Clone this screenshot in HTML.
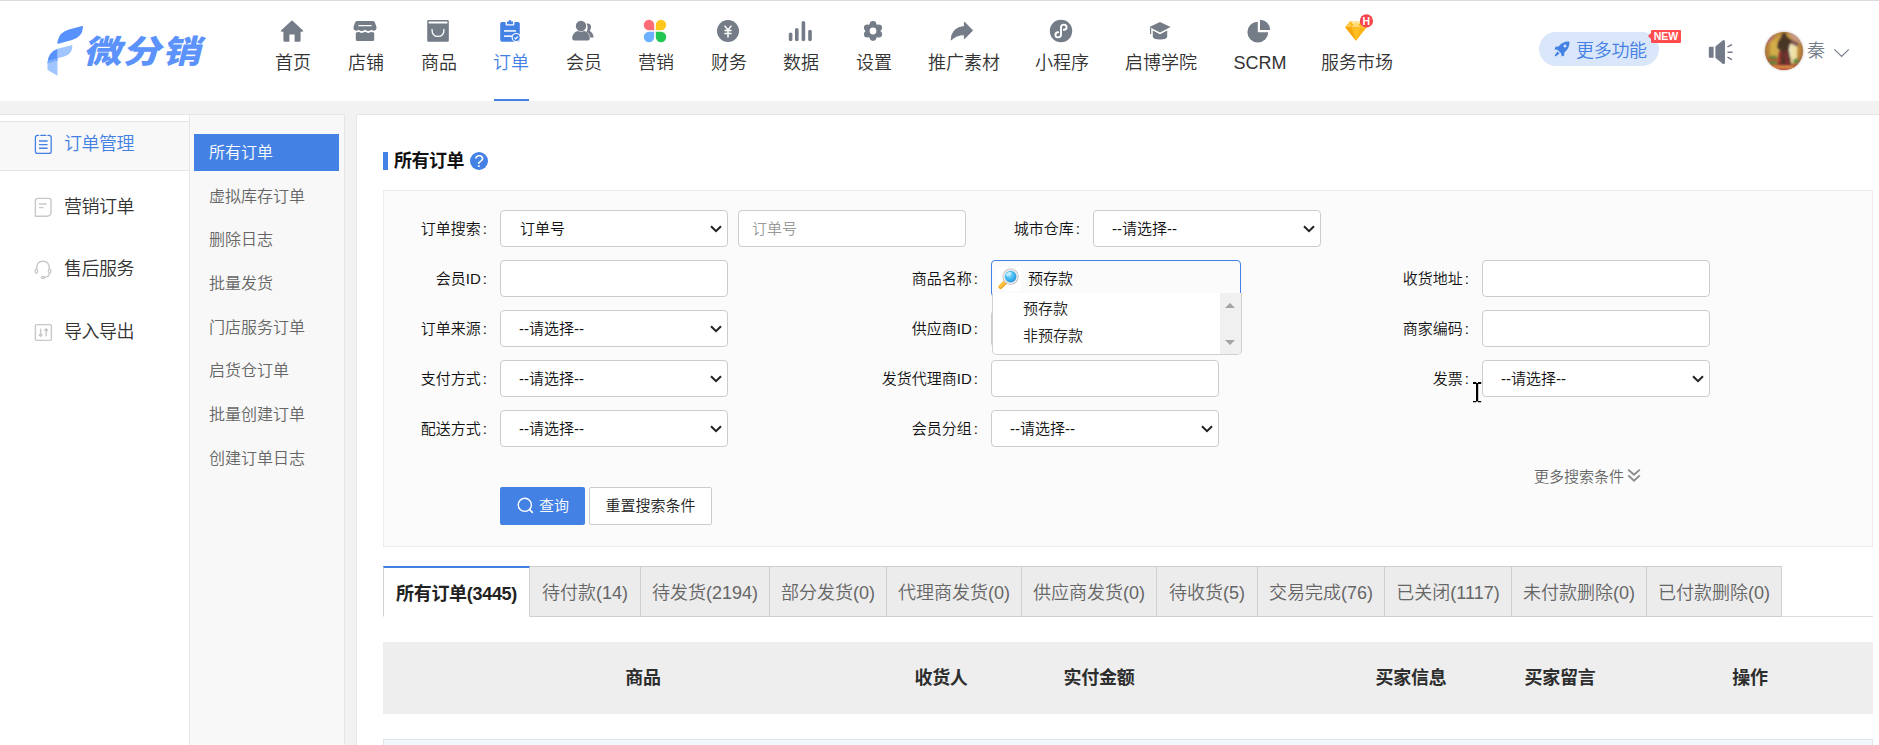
<!DOCTYPE html>
<html lang="zh-CN">
<head>
<meta charset="utf-8">
<title>所有订单</title>
<style>
*{box-sizing:border-box;margin:0;padding:0}
html,body{width:1879px;height:745px;overflow:hidden}
body{background:#f2f2f2;font-family:"Liberation Sans","Noto Sans CJK SC",sans-serif;color:#333;position:relative;font-size:15px}
.abs{position:absolute}
/* header */
#topline{position:absolute;left:0;top:0;width:1879px;height:2px;background:#d9dadb}
#header{position:absolute;left:0;top:1px;width:1879px;height:100px;background:#fff}
.nav{position:absolute;top:0;height:100px;text-align:center;white-space:nowrap;color:#333;font-size:18px}
.nav .ic{position:absolute;left:50%;top:16px;width:28px;height:28px;margin-left:-15px}
.nav .tx{position:absolute;left:50%;top:49px;transform:translateX(-50%);line-height:26px;height:26px;font-weight:350}
.nav.on{color:#4481e4}
.nav.on:after{content:"";position:absolute;left:50%;margin-left:-17px;bottom:0;width:35px;height:2px;background:#4481e4}

#logotx{left:80px;top:22px;font-family:"Noto Sans CJK SC","Liberation Sans",sans-serif;font-weight:900;font-size:32px;line-height:52px;color:#5b92fb;transform:skewX(-14deg) scaleX(1.2);transform-origin:0 100%;letter-spacing:1px;white-space:nowrap}
#more{left:1539px;top:31px;width:120px;height:34px;border-radius:17px;background:#dae6fa;color:#4481e4;font-size:18px;line-height:34px;font-weight:350}
#more span{position:absolute;left:37px;top:2px;white-space:nowrap;letter-spacing:-0.3px}
#new{left:1651px;top:29px;width:30px;height:13px;background:#ff4d4f;color:#fff;font-size:10.5px;font-weight:bold;line-height:13px;text-align:center;border-radius:1px;letter-spacing:0}
#new i{position:absolute;left:-3px;top:3px;border:3.5px solid transparent;border-left:none;border-right:3px solid #ff4d4f;width:0;height:0}
#avatar{left:1762px;top:28px}
#uname{left:1807px;top:37px;font-size:18px;line-height:26px;color:#737b87;font-weight:350}
/* sidebars */
#side1{position:absolute;left:0;top:114px;width:190px;height:631px;background:#fff;border-right:1px solid #e6e6e6;border-top:1px solid #e6e6e6}
.s1{position:absolute;left:0;width:189px;height:50px;font-size:18px;line-height:26px;color:#333;font-weight:350}
.s1 .t{position:absolute;left:64px;top:11px;white-space:nowrap;letter-spacing:-0.5px}
.s1 svg{position:absolute;left:33px;top:13px}
#side2{position:absolute;left:190px;top:114px;width:155px;height:631px;background:#f8f8f8;border-right:1px solid #e6e6e6;border-top:1px solid #e6e6e6}
.s2{position:absolute;left:19px;font-size:16px;line-height:22px;color:#666;white-space:nowrap;font-weight:350}
#main{position:absolute;left:356px;top:114px;width:1523px;height:631px;background:#fff;border-top:1px solid #e6e6e6;border-left:1px solid #e6e6e6}
/* form */
#panel{position:absolute;left:383px;top:190px;width:1490px;height:357px;background:#fbfbfb;border:1px solid #ececec}
.lb{position:absolute;font-size:15px;line-height:22px;color:#111;white-space:nowrap;text-align:right;font-weight:350}
.lb i{font-style:normal;margin-left:2px}
.inp{position:absolute;height:37px;background:#fff;border:1px solid #ccc;border-radius:4px;font-size:15px;line-height:35px;color:#111;white-space:nowrap;font-weight:350}
.sel .v{position:absolute;left:19px;top:0}
.sel svg{position:absolute;right:4px;top:12.500px}
.tab{position:absolute;top:566px;height:51px;background:#ececec;border:1px solid #cfcfcf;border-left:none;font-size:18px;line-height:52px;color:#666;text-align:center;white-space:nowrap;font-weight:350}
.th{position:absolute;top:665px;font-size:18px;line-height:26px;font-weight:bold;color:#2d2d2d;transform:translateX(-50%);white-space:nowrap;letter-spacing:-0.3px}

#ttl{left:394px;top:148px;font-size:18px;line-height:26px;font-weight:bold;color:#111;white-space:nowrap;letter-spacing:-0.5px}
#help{left:470px;top:152px;width:18px;height:18px;border-radius:50%;background:#4481e4;color:#fff;font-size:17px;font-weight:normal;line-height:19px;text-align:center;font-family:"Liberation Sans",sans-serif}
#gname{border-color:#4481e4;background:transparent}
#dd{left:992px;top:293px;width:250px;height:62px;background:#fff;border:1px solid #cfcfcf;border-top:none;border-radius:0 0 5px 5px;font-size:15px;line-height:26px;color:#222;font-weight:350;white-space:nowrap;overflow:hidden}
#sb{right:0;top:0;width:21px;height:62px;background:#f0f0f0}
#sb i{position:absolute;left:5px;width:0;height:0;border-left:5.5px solid transparent;border-right:5.5px solid transparent}
#morec{left:1534px;top:466px;font-size:15px;line-height:22px;color:#666;font-weight:350;white-space:nowrap}
#btnq{left:500px;top:487px;width:85px;height:38px;background:#4481e4;border-radius:2px;color:#fff;font-size:15px;line-height:38px;font-weight:350}
#btnq span{position:absolute;left:39px;top:0;white-space:nowrap}
#btnr{left:589px;top:487px;width:123px;height:38px;background:#fff;border:1px solid #ccc;border-radius:2px;color:#222;font-size:15px;line-height:36px;text-align:center;font-weight:350;white-space:nowrap}
.tab.on{background:#fff;border-left:1px solid #cfcfcf;border-top:2px solid #4481e4;border-bottom:1px solid #fff;color:#222;font-weight:bold;line-height:52px;letter-spacing:-0.3px}
</style>
</head>
<body>
<div id="topline"></div>
<div id="header">
<svg class="abs" style="left:44px;top:20px" width="44" height="55.300" viewBox="0 0 44 58" preserveAspectRatio="none">
<path d="M13.500 21.500 Q15.500 11.500 25 9 L38 5.200 Q39.200 5 39 6.400 Q38.600 17 28 20 L13.500 24 Z" fill="#5791fb"/>
<path d="M13.500 29 L27.500 25.500 Q28.500 25.300 28.400 26.400 Q28 35.500 19.500 37.500 L13.500 39 Z" fill="#a1c6ff"/>
<path d="M13.500 29 L13.500 41.500 L3.500 44.500 Q3.200 33 13.500 29 Z" fill="#5791fb"/>
<path d="M3.500 44.500 L13.500 41.500 L13.500 57.500 L3.500 51.500 Z" fill="#a1c6ff"/>
<path d="M13.500 39 L13.500 41.500 L3.500 44.500 Q3.600 42.500 4 41.500 Z" fill="#7aabfd"/>
</svg>
<div class="abs" id="logotx">微分销</div>
<div class="nav" style="left:253px;width:80px"><svg class="ic" viewBox="0 0 28 28"><path d="M14 3.2 L25 13.6 Q25.6 14.6 24.4 14.8 L22.6 14.8 L22.6 23.4 Q22.6 24.8 21.2 24.8 L16.6 24.8 L16.6 17.6 L11.4 17.6 L11.4 24.8 L6.8 24.8 Q5.4 24.8 5.4 23.4 L5.4 14.8 L3.6 14.8 Q2.4 14.6 3 13.6 Z" fill="#747c87"/></svg><span class="tx">首页</span></div>
<div class="nav" style="left:326px;width:80px"><svg class="ic" viewBox="0 0 28 28"><path d="M6.2 4 L21.8 4 Q23.2 4 23.8 5.2 L25.4 9.4 Q25.8 11.6 24.6 13 Q22.6 14.6 20.4 12.8 Q17.6 15.4 14 12.8 Q10.4 15.4 7.6 12.8 Q5.4 14.6 3.4 13 Q2.2 11.6 2.6 9.4 L4.2 5.2 Q4.8 4 6.2 4 Z M7.4 8 L20.6 8 L20.6 9.2 L7.4 9.2 Z" fill="#747c87" fill-rule="evenodd"/><path d="M4.8 15.4 Q6.4 15.6 7.6 14.8 Q10.6 17 14 14.8 Q17.400 17 20.4 14.8 Q21.6 15.6 23.2 15.4 L23.2 22.4 Q23.2 24 21.6 24 L6.4 24 Q4.800 24 4.800 22.4 Z" fill="#747c87"/></svg><span class="tx">店铺</span></div>
<div class="nav" style="left:399px;width:80px"><svg class="ic" viewBox="0 0 28 28"><path d="M4.4 3 L23.600 3 Q24.8 3 24.8 4.2 L24.8 23.600 Q24.8 24.8 23.600 24.8 L4.4 24.8 Q3.2 24.8 3.2 23.600 L3.2 4.2 Q3.2 3 4.4 3 Z M4.6 4.4 L4.6 6.4 L23.400 6.4 L23.400 4.4 Z" fill="#747c87" fill-rule="evenodd"/><path d="M8 12.400 Q8 19.400 14 19.400 Q20 19.400 20 12.400" fill="none" stroke="#fff" stroke-width="1.3" stroke-linecap="round"/></svg><span class="tx">商品</span></div>
<div class="nav on" style="left:471px;width:80px"><svg class="ic" viewBox="0 0 28 28"><path d="M6 5 L9.600 5 L9.600 7.2 Q9.600 8.6 11 8.6 L17 8.6 Q18.400 8.6 18.400 7.2 L18.400 5 L22 5 Q23.800 5 23.800 6.800 L23.800 23 Q23.800 24.8 22 24.8 L6 24.8 Q4.200 24.8 4.200 23 L4.200 6.800 Q4.200 5 6 5 Z" fill="#4481e4"/><path d="M11 4.400 L12.600 4.400 Q13 3 14 3 Q15 3 15.400 4.400 L17 4.400 L17 7.2 L11 7.2 Z" fill="#4481e4"/><rect x="8" y="13.2" width="12" height="1.5" fill="#fff"/><rect x="8" y="18.400" width="8" height="1.5" fill="#fff"/><circle cx="20.200" cy="20.600" r="4.600" fill="#fff"/><circle cx="20.200" cy="20.600" r="3.500" fill="#4481e4"/><path d="M18.400 20.600 L19.700 21.900 L22 19.500" fill="none" stroke="#fff" stroke-width="1.200"/></svg><span class="tx">订单</span></div>
<div class="nav" style="left:544px;width:80px"><svg class="ic" viewBox="0 0 28 28"><path d="M17.600 6.600 Q21.400 5.800 22 9.800 Q22.200 12.200 20.600 13.800 Q24.200 16.200 24.600 20.400 L21.400 20.400 Q20.600 16.400 17.600 14.800 Q19.600 10.800 17.600 6.600 Z" fill="#747c87"/><circle cx="12" cy="9" r="5.200" fill="#747c87"/><path d="M3.200 21.400 Q3.400 15.600 8.600 14 Q12 15.600 15.400 14 Q20.600 15.600 20.800 21.400 Q20.800 23.400 18.800 23.400 L5.200 23.400 Q3.200 23.400 3.200 21.400 Z" fill="#747c87"/></svg><span class="tx">会员</span></div>
<div class="nav" style="left:616px;width:80px"><svg class="ic" viewBox="0 0 28 28"><path d="M13.200 13.200 L8 13.200 A5.200 5.200 0 1 1 13.200 8 Z" fill="#ff6b76"/><path d="M14.800 13.200 L14.800 8 A5.200 5.200 0 1 1 20 13.200 Z" fill="#ffc71c"/><path d="M13.200 14.800 L13.200 20 A5.200 5.200 0 1 1 8 14.800 Z" fill="#6cb0ff"/><path d="M14.800 14.800 L20 14.800 A5.200 5.200 0 1 1 14.800 20 Z" fill="#21c653"/></svg><span class="tx">营销</span></div>
<div class="nav" style="left:689px;width:80px"><svg class="ic" viewBox="0 0 28 28"><circle cx="14" cy="14" r="11" fill="#747c87"/><path d="M10.600 8.600 L14 13 L17.400 8.600 M10.400 13.400 L17.600 13.400 M10.400 16.400 L17.600 16.400 M14 13 L14 20.400" fill="none" stroke="#fff" stroke-width="1.500"/></svg><span class="tx">财务</span></div>
<div class="nav" style="left:761px;width:80px"><svg class="ic" viewBox="0 0 28 28"><g stroke="#747c87" stroke-width="3.600" stroke-linecap="round"><path d="M4.600 17.200 L4.600 22.400"/><path d="M10.800 12.800 L10.800 22.400"/><path d="M17.400 5.800 L17.400 22.400"/><path d="M24 14.600 L24 22.400"/></g></svg><span class="tx">数据</span></div>
<div class="nav" style="left:834px;width:80px"><svg class="ic" viewBox="0 0 28 28"><g fill="#747c87"><circle cx="14" cy="14" r="7.600"/><circle cx="19.72" cy="17.30" r="3.3"/><circle cx="14.00" cy="20.60" r="3.3"/><circle cx="8.28" cy="17.30" r="3.3"/><circle cx="8.28" cy="10.70" r="3.3"/><circle cx="14.00" cy="7.40" r="3.3"/><circle cx="19.72" cy="10.70" r="3.3"/></g><circle cx="14" cy="14" r="3.400" fill="#fff"/></svg><span class="tx">设置</span></div>
<div class="nav" style="left:924px;width:80px"><svg class="ic" viewBox="0 0 28 28"><path d="M15.400 5 L23.600 13.400 L15.400 21.800 L15.400 17.800 Q7.600 17.400 2.200 23 Q2.400 10.600 15.400 9.400 Z" fill="#747c87" stroke="#747c87" stroke-width="1" stroke-linejoin="round"/></svg><span class="tx">推广素材</span></div>
<div class="nav" style="left:1022px;width:80px"><svg class="ic" viewBox="0 0 28 28"><circle cx="14" cy="14" r="11.200" fill="#747c87"/><path d="M14 17.600 Q14 20.400 11.200 20.400 Q8.400 20.400 8.400 17.800 Q8.400 15.400 11.200 15.200 M14 17.600 L14 10.400 Q14 7.600 16.800 7.600 Q19.600 7.600 19.600 10.200 Q19.600 12.600 16.800 12.800" fill="none" stroke="#fff" stroke-width="1.900" stroke-linecap="round"/></svg><span class="tx">小程序</span></div>
<div class="nav" style="left:1121px;width:80px"><svg class="ic" viewBox="0 0 28 28"><path d="M14 5 L24.600 10 L14 15.600 L3.400 10 Z" fill="#747c87"/><path d="M6.800 13.400 L14 17.200 L21.200 13.400 L21.200 19.600 Q21.200 22.400 14 22.600 Q6.800 22.400 6.800 19.600 Z" fill="#747c87"/><path d="M4 10.600 L5.200 11.200 L5.200 17 L4 17 Z" fill="#747c87"/></svg><span class="tx">启博学院</span></div>
<div class="nav" style="left:1220px;width:80px"><svg class="ic" viewBox="0 0 28 28"><path d="M12.800 4.800 L12.800 15.200 L23.200 15.200 A10.400 10.400 0 1 1 12.800 4.800 Z" fill="#747c87"/><path d="M15 2.800 A10.200 10.200 0 0 1 25.200 13 L15 13 Z" fill="#747c87"/></svg><span class="tx">SCRM</span></div>
<div class="nav" style="left:1317px;width:80px"><svg class="ic" viewBox="0 0 28 28" style="overflow:visible"><path d="M8.200 4 L19.800 4 L24.800 10.200 L14 23.800 L3.200 10.200 Z" fill="#fdb515"/><path d="M8.200 4 L14 10.200 L19.800 4 Z" fill="#ffe7a8"/><path d="M3.200 10.200 L8.200 4 L9.400 10.200 Z" fill="#fec84c"/><path d="M24.800 10.200 L19.800 4 L18.600 10.200 Z" fill="#fec84c"/><path d="M9.400 10.200 L14 4.800 L18.600 10.200 Z" fill="#ffd874"/><path d="M9.400 10.200 L18.600 10.200 L14 23.800 Z" fill="#fdbd24"/><path d="M3.200 10.200 L9.400 10.200 L14 23.800 Z" fill="#f9a60b"/><circle cx="24.400" cy="3.900" r="6.600" fill="#f5454c"/><text x="24.400" y="7.600" font-family="Liberation Sans,sans-serif" font-size="10.500" font-weight="bold" fill="#fff" text-anchor="middle">H</text></svg><span class="tx">服务市场</span></div>
<div class="abs" id="more"><svg class="abs" style="left:14px;top:8px" width="18" height="18" viewBox="0 0 18 18"><path d="M16.400 1.600 Q16.800 8.400 11.400 12.400 L11.200 15.400 L8.600 16.400 L8.200 13.600 L4.400 9.800 L1.600 9.400 L2.600 6.800 L5.600 6.600 Q9.600 1.200 16.400 1.600 Z M12 4.600 A1.500 1.500 0 1 0 12.010 4.600 Z" fill="#4481e4" fill-rule="evenodd"/><path d="M4.400 11.400 L6.600 13.600 L2.600 16.400 L1.600 15.400 Z" fill="#4481e4"/></svg><span>更多功能</span></div>
<div class="abs" id="new"><i></i>NEW</div>
<svg class="abs" style="left:1706px;top:36px" width="30" height="30" viewBox="0 0 30 30"><path d="M3.800 9.800 L7.600 9.800 L7.600 20.800 L3.800 20.800 Q2.800 20.800 2.800 19.800 L2.800 10.800 Q2.800 9.800 3.800 9.800 Z" fill="#727b87"/><path d="M9.400 9.400 L16.600 3.400 Q18.800 2.400 19 4.800 L19 25.400 Q18.800 27.800 16.600 26.800 L9.400 20.800 Z" fill="#727b87"/><path d="M22 9.600 L25.400 7.800 M22 15.200 L26 15.200 M22 20.400 L25.400 22.400" stroke="#727b87" stroke-width="1.500" stroke-linecap="round" fill="none"/></svg>
<svg class="abs" id="avatar" width="44" height="44" viewBox="0 0 44 44"><defs><clipPath id="avc"><circle cx="22" cy="22" r="19"/></clipPath><filter id="avb" x="-10%" y="-10%" width="120%" height="120%"><feGaussianBlur stdDeviation="0.8"/></filter><filter id="avs" x="-20%" y="-20%" width="140%" height="140%"><feGaussianBlur stdDeviation="1"/></filter><radialGradient id="avg" cx="0.5" cy="0.45" r="0.6"><stop offset="0" stop-color="#e6c86a"/><stop offset="0.55" stop-color="#c9a040"/><stop offset="0.85" stop-color="#a8703c"/><stop offset="1" stop-color="#9a4a4a"/></radialGradient></defs>
<circle cx="22" cy="22" r="19.600" fill="#a08070" opacity=".45" filter="url(#avs)"/>
<g clip-path="url(#avc)"><rect x="3" y="3" width="38" height="38" fill="url(#avg)"/><g filter="url(#avb)">
<path d="M3 3 L14 3 L9 12 L3 16 Z" fill="#b8707a"/><path d="M41 3 L26 3 L30 9 L41 16 Z" fill="#c79a8a"/>
<rect x="9" y="12" width="5" height="22" fill="#d4ac48"/><rect x="29" y="14" width="6" height="20" fill="#efe0a8"/><rect x="25" y="16" width="4" height="12" fill="#fff4d0"/>
<path d="M20.500 4 L23.500 4 L25 8 L29 10.500 L32 15 L28 14.500 L27 21 L29.500 36 L16 36 L18 21 L15 19 L16 13 L19 8.500 Z" fill="#4a3528"/>
<path d="M17 22 L20 22 L19 37 L15 37 Z" fill="#8e3230"/><path d="M22 22 L25 22 L28 37 L23 37 Z" fill="#7a3030"/>
<path d="M28 10 L36 14 L36 18 L30 15 Z" fill="#7a4a5a"/>
<ellipse cx="11" cy="31" rx="5" ry="4.500" fill="#5a8438"/><rect x="5" y="30" width="13" height="2" fill="#c04a34"/><ellipse cx="34" cy="32" rx="3" ry="2.500" fill="#6a8a3a"/>
<rect x="3" y="36" width="38" height="6" fill="#c0443e"/><rect x="10" y="37.200" width="22" height="1.800" fill="#dca648"/>
</g></g></svg>
<div class="abs" id="uname">秦</div>
<svg class="abs" style="left:1832px;top:46px" width="20" height="12" viewBox="0 0 20 12"><path d="M2.400 2.400 L9.600 9.400 L16.800 2.400" fill="none" stroke="#79818c" stroke-width="1.300"/></svg>
</div>
<div id="side1">
<div class="abs" style="left:0;top:6px;width:189px;height:50px;background:#f8f8f8;border-top:1px solid #e6e6e6;border-bottom:1px solid #e6e6e6"></div>
<div class="s1" style="top:5px;color:#4481e4"><svg width="21" height="23" viewBox="0 0 21 23"><path d="M5.600 2.400 L4.600 2.400 Q2.400 2.400 2.400 4.600 L2.400 18.200 Q2.400 20.400 4.600 20.400 L16 20.400 Q18.200 20.400 18.200 18.200 L18.200 4.600 Q18.200 2.400 16 2.400 L15 2.400 M7.800 2.400 L12.800 2.400" fill="none" stroke="#4481e4" stroke-width="1.300" stroke-linecap="round"/><path d="M6 8 L14.600 8 M6 11.600 L14.600 11.600 M6 15.200 L14.600 15.200" stroke="#4481e4" stroke-width="1.400" fill="none"/></svg><span class="t">订单管理</span></div>
<div class="s1" style="top:67.5px;color:#333"><svg width="20" height="22" viewBox="0 0 20 22"><path d="M4.600 2.400 L15.800 2.400 Q18 2.400 18 4.600 L18 16 Q18 20.200 13.800 20.200 L2.400 20.200 L2.400 4.600 Q2.400 2.400 4.600 2.400 Z" fill="none" stroke="#c8c8c8" stroke-width="1.400"/><path d="M6 8 L13.600 8 M6 11.600 L10.400 11.600" stroke="#c8c8c8" stroke-width="1.400" fill="none"/></svg><span class="t">营销订单</span></div>
<div class="s1" style="top:130px;color:#333"><svg width="20" height="22" viewBox="0 0 20 22"><path d="M3.600 12 Q3.200 3.200 10 3.200 Q16.800 3.200 16.400 12" fill="none" stroke="#c8c8c8" stroke-width="1.400"/><ellipse cx="3.400" cy="13.200" rx="1.300" ry="2.100" fill="none" stroke="#c8c8c8" stroke-width="1.300"/><ellipse cx="16.600" cy="13.200" rx="1.300" ry="2.100" fill="none" stroke="#c8c8c8" stroke-width="1.300"/><path d="M16.600 15.400 Q16.200 19 11.600 19.400" fill="none" stroke="#c8c8c8" stroke-width="1.300"/><ellipse cx="10" cy="19.400" rx="1.700" ry="1.100" fill="none" stroke="#c8c8c8" stroke-width="1.300"/></svg><span class="t">售后服务</span></div>
<div class="s1" style="top:192.5px;color:#333"><svg width="20" height="22" viewBox="0 0 20 22"><rect x="2.400" y="3.600" width="16" height="15.800" rx="1.400" fill="none" stroke="#c8c8c8" stroke-width="1.400"/><path d="M7.600 7.800 L7.600 15.200 M5.800 13.200 L7.600 15.200 L9.400 13.200 M13.200 15.200 L13.200 7.800 M11.400 9.800 L13.200 7.800 L15 9.800" fill="none" stroke="#c8c8c8" stroke-width="1.400"/></svg><span class="t">导入导出</span></div>
</div>
<div id="side2">
<div class="abs" style="left:4px;top:19px;width:145px;height:37px;background:#4481e4"></div>
<div class="s2" style="top:26.5px;color:#fff">所有订单</div>
<div class="s2" style="top:70.5px;color:#666">虚拟库存订单</div>
<div class="s2" style="top:114px;color:#666">删除日志</div>
<div class="s2" style="top:157.5px;color:#666">批量发货</div>
<div class="s2" style="top:201.5px;color:#666">门店服务订单</div>
<div class="s2" style="top:245px;color:#666">启货仓订单</div>
<div class="s2" style="top:288.5px;color:#666">批量创建订单</div>
<div class="s2" style="top:332.5px;color:#666">创建订单日志</div>
</div>
<div id="main"></div>
<div class="abs" style="left:383px;top:152px;width:5px;height:18px;background:#4481e4"></div>
<div class="abs" id="ttl">所有订单</div>
<div class="abs" id="help">?</div>
<div id="panel"></div>
<div class="lb" style="left:327px;width:160px;top:218px">订单搜索<i>:</i></div>
<div class="inp sel" style="left:500px;top:210px;width:228px"><span class="v">订单号</span><svg width="14" height="10" viewBox="0 0 14 10"><path d="M2 2.200 L7 7.200 L12 2.200" fill="none" stroke="#222" stroke-width="2"/></svg></div>
<div class="inp" style="left:738px;top:210px;width:228px;"><span style="position:absolute;left:13px;top:0;color:#999">订单号</span></div>
<div class="lb" style="left:920px;width:160px;top:218px">城市仓库<i>:</i></div>
<div class="inp sel" style="left:1093px;top:210px;width:228px"><span class="v" style="left:18px">--请选择--</span><svg width="14" height="10" viewBox="0 0 14 10"><path d="M2 2.200 L7 7.200 L12 2.200" fill="none" stroke="#222" stroke-width="2"/></svg></div>
<div class="lb" style="left:327px;width:160px;top:268px">会员ID<i>:</i></div>
<div class="inp" style="left:500px;top:260px;width:228px;"></div>
<div class="lb" style="left:818px;width:160px;top:268px">商品名称<i>:</i></div>
<div class="lb" style="left:1309px;width:160px;top:268px">收货地址<i>:</i></div>
<div class="inp" style="left:1482px;top:260px;width:228px;"></div>
<div class="lb" style="left:327px;width:160px;top:318px">订单来源<i>:</i></div>
<div class="inp sel" style="left:500px;top:310px;width:228px"><span class="v" style="left:18px">--请选择--</span><svg width="14" height="10" viewBox="0 0 14 10"><path d="M2 2.200 L7 7.200 L12 2.200" fill="none" stroke="#222" stroke-width="2"/></svg></div>
<div class="lb" style="left:818px;width:160px;top:318px">供应商ID<i>:</i></div>
<div class="inp" style="left:991px;top:310px;width:228px;"></div>
<div class="lb" style="left:1309px;width:160px;top:318px">商家编码<i>:</i></div>
<div class="inp" style="left:1482px;top:310px;width:228px;"></div>
<div class="lb" style="left:327px;width:160px;top:368px">支付方式<i>:</i></div>
<div class="inp sel" style="left:500px;top:360px;width:228px"><span class="v" style="left:18px">--请选择--</span><svg width="14" height="10" viewBox="0 0 14 10"><path d="M2 2.200 L7 7.200 L12 2.200" fill="none" stroke="#222" stroke-width="2"/></svg></div>
<div class="lb" style="left:818px;width:160px;top:368px">发货代理商ID<i>:</i></div>
<div class="inp" style="left:991px;top:360px;width:228px;"></div>
<div class="lb" style="left:1309px;width:160px;top:368px">发票<i>:</i></div>
<div class="inp sel" style="left:1482px;top:360px;width:228px"><span class="v" style="left:18px">--请选择--</span><svg width="14" height="10" viewBox="0 0 14 10"><path d="M2 2.200 L7 7.200 L12 2.200" fill="none" stroke="#222" stroke-width="2"/></svg></div>
<div class="lb" style="left:327px;width:160px;top:418px">配送方式<i>:</i></div>
<div class="inp sel" style="left:500px;top:410px;width:228px"><span class="v" style="left:18px">--请选择--</span><svg width="14" height="10" viewBox="0 0 14 10"><path d="M2 2.200 L7 7.200 L12 2.200" fill="none" stroke="#222" stroke-width="2"/></svg></div>
<div class="lb" style="left:818px;width:160px;top:418px">会员分组<i>:</i></div>
<div class="inp sel" style="left:991px;top:410px;width:228px"><span class="v" style="left:18px">--请选择--</span><svg width="14" height="10" viewBox="0 0 14 10"><path d="M2 2.200 L7 7.200 L12 2.200" fill="none" stroke="#222" stroke-width="2"/></svg></div>
<div class="inp" id="gname" style="left:991px;top:260px;width:250px"><svg class="abs" style="left:4px;top:5px" width="26" height="26" viewBox="0 0 26 26"><defs><radialGradient id="lens" cx="0.4" cy="0.35" r="0.7"><stop offset="0" stop-color="#8fe0ff"/><stop offset="0.6" stop-color="#3ab4ee"/><stop offset="1" stop-color="#2a90d8"/></radialGradient><linearGradient id="hnd" x1="0" y1="0" x2="1" y2="1"><stop offset="0" stop-color="#ffd257"/><stop offset="1" stop-color="#e8940c"/></linearGradient></defs><rect x="0.500" y="1" width="24.500" height="23.500" fill="#fff"/><path d="M9.800 15.600 L4.400 20.800" stroke="url(#hnd)" stroke-width="4.400" stroke-linecap="round"/><path d="M9.800 15.200 L4.400 20.400" stroke="#ffc445" stroke-width="1.800" stroke-linecap="round"/><circle cx="14.600" cy="10.600" r="8.200" fill="#c4c4c4"/><circle cx="14.600" cy="10.600" r="7.300" fill="#ececec"/><circle cx="14.600" cy="10.600" r="5.800" fill="url(#lens)"/><ellipse cx="12.800" cy="8" rx="3" ry="1.800" fill="#d8f5ff" opacity=".75" transform="rotate(-30 12.800 8)"/></svg><span style="position:absolute;left:36px;top:0">预存款</span></div>
<div class="abs" id="dd"><div class="abs" style="left:30px;top:3px">预存款</div><div class="abs" style="left:30px;top:30px">非预存款</div><div class="abs" id="sb"><i style="top:10px;border-bottom:5.5px solid #a3a3a3;border-top:none"></i><i style="top:47px;border-top:5.5px solid #a3a3a3;border-bottom:none"></i></div></div>
<svg class="abs" style="left:1472px;top:381px" width="10" height="22" viewBox="0 0 10 22"><path d="M1 1 H4.200 V3 H1 Z M6 1 H9.200 V3 H6 Z M4 2 H6.200 V20.600 H4 Z M1 20 H4.200 V21.200 H1 Z M6 20 H9.200 V21.200 H6 Z" fill="#000"/></svg>
<div class="abs" id="morec">更多搜索条件<svg width="14" height="15" viewBox="0 0 14 15" style="position:absolute;left:93px;top:2px"><path d="M1.200 1.600 L7 6.800 L12.800 1.600 M1.200 7.400 L7 12.600 L12.800 7.400" fill="none" stroke="#8c8c8c" stroke-width="1.900"/></svg></div>
<div class="abs" id="btnq"><svg class="abs" style="left:16px;top:9px" width="19" height="19" viewBox="0 0 19 19"><circle cx="8.800" cy="8.800" r="6.600" fill="none" stroke="#fff" stroke-width="1.400"/><path d="M13.600 13.600 L16.400 16.400" stroke="#fff" stroke-width="1.500" stroke-linecap="round"/></svg><span>查询</span></div>
<div class="abs" id="btnr">重置搜索条件</div>
<div class="abs" style="left:383px;top:616px;width:1490px;height:1px;background:#ddd"></div>
<div class="tab on" style="left:383px;width:147px">所有订单(3445)</div>
<div class="tab" style="left:530px;width:111px">待付款(14)</div>
<div class="tab" style="left:641px;width:129px">待发货(2194)</div>
<div class="tab" style="left:770px;width:117px">部分发货(0)</div>
<div class="tab" style="left:887px;width:135px">代理商发货(0)</div>
<div class="tab" style="left:1022px;width:135px">供应商发货(0)</div>
<div class="tab" style="left:1157px;width:101px">待收货(5)</div>
<div class="tab" style="left:1258px;width:127px">交易完成(76)</div>
<div class="tab" style="left:1385px;width:127px">已关闭(1117)</div>
<div class="tab" style="left:1512px;width:135px">未付款删除(0)</div>
<div class="tab" style="left:1647px;width:135px">已付款删除(0)</div>
<div class="abs" style="left:383px;top:642px;width:1490px;height:72px;background:#eee"></div>
<div class="th" style="left:643px">商品</div>
<div class="th" style="left:941px">收货人</div>
<div class="th" style="left:1099px">实付金额</div>
<div class="th" style="left:1411px">买家信息</div>
<div class="th" style="left:1560px">买家留言</div>
<div class="th" style="left:1750px">操作</div>
<div class="abs" style="left:383px;top:739px;width:1490px;height:10px;background:#f1f7fc;border:1px solid #e0e6ee"></div>

</body>
</html>
